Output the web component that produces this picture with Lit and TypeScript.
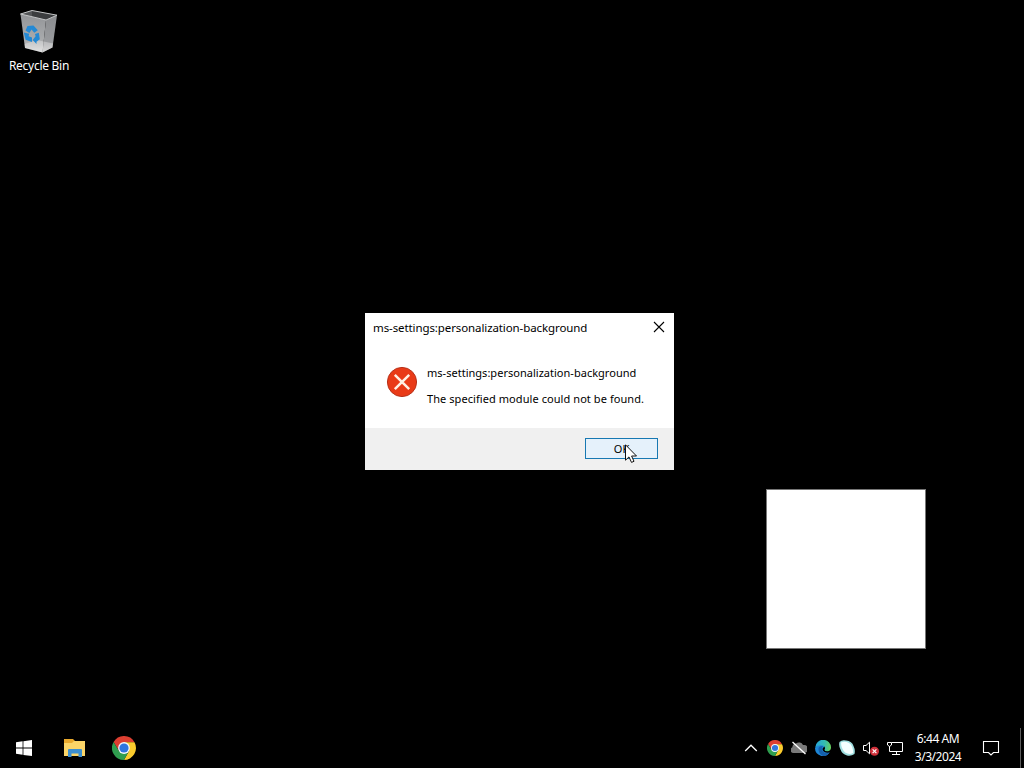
import {LitElement, css, html, svg} from 'lit';
import {customElement, property} from 'lit/decorators.js';

const chromeMark = svg`
  <path d="M12 6.2 H22.5 A12 12 0 0 0 1.6 6 L7 15 L12 12 Z" fill="#dd3f31" />
  <path d="M17.1 14.8 L12 24 A12 12 0 0 0 22.5 6.2 H12 V12 Z" fill="#fbcb2d" />
  <path d="M1.6 6 A12 12 0 0 0 12 24 L17.1 14.8 L12 12 L7 15 Z" fill="#2f9e4f" />
  <circle cx="12" cy="12" r="5.9" fill="#f4f7fb" />
  <circle cx="12" cy="12" r="4.6" fill="#2f76df" />
`;

@customElement('desktop-icon')
export class DesktopIcon extends LitElement {
  @property() label = '';

  static styles = css`
    :host {
      display: flex;
      flex-direction: column;
      align-items: center;
      gap: 1px;
      width: 76px;
      color: #fff;
      font-size: 12px;
      line-height: 16px;
    }

    .picture {
      display: block;
      width: 48px;
      height: 48px;
    }

    .label {
      letter-spacing: -0.27px;
      white-space: nowrap;
      text-shadow: 0 1px 2px #000;
    }
  `;

  render() {
    return html`
      <svg class="picture" viewBox="0 0 48 48">
        <defs>
          <linearGradient id="left" x1="0" y1="0" x2="0" y2="1">
            <stop offset="0" stop-color="#939598" />
            <stop offset="0.7" stop-color="#aaacae" />
            <stop offset="1" stop-color="#dcdcdc" />
          </linearGradient>
          <linearGradient id="right" x1="0" y1="0" x2="0" y2="1">
            <stop offset="0" stop-color="#8b8d90" />
            <stop offset="0.72" stop-color="#999b9e" />
            <stop offset="1" stop-color="#c9c9ca" />
          </linearGradient>
        </defs>
        <path d="M5.5 5 L17 1.5 L42 6.2 L31 11 Z" fill="#3b3d3f" />
        <path d="M5.5 5 L17 1.5 V7.5 Z" fill="#535557" />
        <path d="M5.5 5 L31 11 L27.5 43.5 L10 39 Z" fill="url(#left)" />
        <path d="M31 11 L42 6.2 L37.5 38.5 L27.5 43.5 Z" fill="url(#right)" />
        <path d="M9.5 35 L22 31 L38 34.5 L37.5 38.5 L27.5 43.5 L10 39 Z" fill="#ececec" opacity="0.4" />
        <path d="M5.5 5 L17 1.5 L42 6.2 L31 11 Z" fill="none" stroke="#c4c6c7" />
        <g fill="#2389d4">
          <path d="M12.5 17 L18.5 16.5 L22.8 21.2 L19.3 23.8 L16.5 20.5 L14.4 24 L10.5 21.5 Z" />
          <path d="M8.8 23.5 L14.2 24.7 L13.6 27.2 L17 28.5 V33 L10.6 30.8 Z" />
          <path d="M20 25 L23.8 23.8 L24.8 30.2 L21.5 32.8 V35 L17.7 31 L20.6 27.2 Z" />
        </g>
      </svg>
      <span class="label">${this.label}</span>
    `;
  }
}

@customElement('message-box')
export class MessageBox extends LitElement {
  @property() heading = '';
  @property() message = '';

  static styles = css`
    :host {
      display: flex;
      flex-direction: column;
      box-sizing: border-box;
      width: 309px;
      height: 157px;
      background: #fff;
      color: #000;
      font-size: 12px;
      line-height: 16px;
    }

    .title-bar {
      display: flex;
      justify-content: space-between;
      height: 30px;
      padding: 7px 9px 0 8px;
      box-sizing: border-box;
    }

    .title {
      font-size: 11.5px;
      letter-spacing: -0.1px;
      white-space: nowrap;
    }

    .close {
      width: 12px;
      height: 12px;
      margin-top: 1px;
    }

    .content {
      display: flex;
      flex: 1;
      gap: 9px;
      padding: 23px 0 0 21px;
    }

    .error {
      flex: none;
      width: 32px;
      height: 32px;
    }

    .lines {
      display: flex;
      flex-direction: column;
      gap: 10px;
      margin-top: -1px;
      font-size: 11px;
      white-space: nowrap;
    }

    .line {
      letter-spacing: 0.02px;
    }

    .line + .line {
      letter-spacing: 0.07px;
    }

    .footer {
      display: flex;
      justify-content: flex-end;
      height: 42px;
      padding: 10px 16px 0 0;
      box-sizing: border-box;
      background: #f0f0f0;
    }

    .ok {
      width: 73px;
      height: 21px;
      padding: 0;
      border: 1px solid #1778b2;
      background: #e5f1fb;
      color: #000;
      font: inherit;
      font-size: 11px;
      line-height: 18px;
    }
  `;

  render() {
    return html`
      <div class="title-bar">
        <span class="title">${this.heading}</span>
        <svg class="close" viewBox="0 0 12 12">
          <path d="M1 1 L11 11 M11 1 L1 11" stroke="#000" stroke-width="1.1" />
        </svg>
      </div>
      <div class="content">
        <svg class="error" viewBox="0 0 32 32">
          <circle cx="16" cy="16" r="14.6" fill="#e93a17" stroke="#b7321a" />
          <path d="M8.8 8.8 L23.2 23.2 M23.2 8.8 L8.8 23.2" stroke="#fff0e4" stroke-width="2.5" />
        </svg>
        <div class="lines">
          <span class="line">${this.heading}</span>
          <span class="line">${this.message}</span>
        </div>
      </div>
      <div class="footer">
        <button class="ok">OK</button>
      </div>
    `;
  }
}

@customElement('task-bar')
export class TaskBar extends LitElement {
  @property() time = '';
  @property() date = '';

  static styles = css`
    :host {
      display: flex;
      justify-content: space-between;
      height: 40px;
      color: #fff;
      font-size: 12px;
    }

    .apps,
    .tray {
      display: flex;
      align-items: center;
    }

    .apps {
      gap: 2px;
    }

    .app {
      display: flex;
      align-items: center;
      justify-content: center;
      width: 48px;
      height: 40px;
    }

    .app svg {
      width: 24px;
      height: 24px;
    }

    .status {
      display: flex;
      gap: 8px;
    }

    .status svg {
      width: 16px;
      height: 16px;
    }

    .clock {
      display: flex;
      flex-direction: column;
      align-items: center;
      width: 70px;
      padding-bottom: 1px;
      line-height: 18px;
      letter-spacing: -0.45px;
      white-space: nowrap;
    }

    .actions {
      width: 18px;
      height: 18px;
      margin: 0 20px 0 9px;
    }

    .peek {
      width: 4px;
      height: 40px;
      border-left: 1px solid #5c5c5c;
      box-sizing: border-box;
    }
  `;

  render() {
    return html`
      <div class="apps">
        <div class="app">
          <svg viewBox="0 0 24 24">
            <path d="M4 6.3 L10.6 5.3 V11.5 H4 Z M11.4 5.2 L20 4 V11.5 H11.4 Z M4 12.5 H10.6 V18.8 L4 17.8 Z M11.4 12.5 H20 V20 L11.4 18.9 Z" fill="#fff" />
          </svg>
        </div>
        <div class="app">
          <svg viewBox="0 0 24 24">
            <path d="M2 3 H11 L13 5 H22.5 V8 H2 Z" fill="#e9a92d" />
            <path d="M2 7 H10 L12 5 H23 V20 H2 Z" fill="#fbd568" />
            <path d="M6 21 V14 Q6 13 7 13 H19 Q20 13 20 14 V21 H16.5 V17.5 H9.5 V21 Z" fill="#3c8fcf" />
          </svg>
        </div>
        <div class="app">
          <svg viewBox="0 0 24 24">${chromeMark}</svg>
        </div>
      </div>
      <div class="tray">
        <div class="status">
          <svg viewBox="0 0 16 16">
            <path d="M2.2 11 L8 5.2 L13.8 11" fill="none" stroke="#fff" stroke-width="1.3" />
          </svg>
          <svg viewBox="0 0 24 24">${chromeMark}</svg>
          <svg viewBox="0 0 16 16">
            <path d="M2.5 13 A3 3 0 0 1 1.4 7.2 A3.5 3.5 0 0 1 5 3.6 A4.4 4.4 0 0 1 12 5 A4 4 0 0 1 13.5 13 Z" fill="#7a7a7a" />
            <path d="M1.5 2 L14.5 14" stroke="#fff" stroke-width="1.3" />
          </svg>
          <svg viewBox="0 0 16 16">
            <defs>
              <linearGradient id="wave" x1="0" y1="0.3" x2="1" y2="0.4">
                <stop offset="0" stop-color="#25a4dc" />
                <stop offset="0.6" stop-color="#35bcae" />
                <stop offset="1" stop-color="#66cf60" />
              </linearGradient>
            </defs>
            <path d="M0 8 A8 8 0 0 1 8 4 Q10 5 9 7 Q6 9 9 11.8 Q12 13.4 14.8 12.2 A8 8 0 0 1 0 8 Z" fill="#1d86d6" />
            <path d="M3.5 8 Q4.5 5.6 8 6 Q5.5 9 8 11.8 Q10.8 14 14.6 12.4 Q12 16 8 16 Q2.8 13 3.5 8 Z" fill="#1560ac" />
            <path d="M0.2 7.4 A7.8 7.8 0 0 1 16 8 Q15.7 11 12.5 11.2 Q9 11.2 9.6 9.5 Q11 7.2 8 5.6 Q4 4.2 0.2 7.4 Z" fill="url(#wave)" />
          </svg>
          <svg viewBox="0 0 16 16">
            <path d="M0.5 2 Q3 -0.5 7 0.5 Q13 1 14.5 6 Q16.5 10 15.5 14 Q12 16.5 8 15.5 Q3 14 1.5 9.5 Q-0.5 6 0.5 2 Z" fill="#9fdfe0" />
            <path d="M2 2.5 Q6 0.8 10 3 Q14 5.5 14.2 13 Q10 15 6.5 12.8 Q2 9 2 2.5 Z" fill="#f4ffff" />
          </svg>
          <svg viewBox="0 0 16 16">
            <path d="M0.5 5.5 H3 L6.5 2.2 V13.8 L3 10.5 H0.5 Z" fill="none" stroke="#fff" />
            <circle cx="11.5" cy="11.2" r="4.5" fill="#cf2f39" />
            <path d="M9.6 9.3 L13.4 13.1 M13.4 9.3 L9.6 13.1" stroke="#fff" stroke-width="1.2" />
          </svg>
          <svg viewBox="0 0 16 16">
            <path d="M4.5 2.5 H15.5 V11.5 H2.5 V6 M9.5 11.5 V14.5 M5 14.5 H13" fill="none" stroke="#fff" />
            <path d="M0.5 2.5 H4.5 V5 L2.5 6.5 L0.5 5 Z" fill="#000" stroke="#fff" />
          </svg>
        </div>
        <div class="clock">
          <span>${this.time}</span>
          <span>${this.date}</span>
        </div>
        <svg class="actions" viewBox="0 0 18 18">
          <path d="M1.5 2.5 H16.5 V13.5 H11.5 L9 16 L6.5 13.5 H1.5 Z" fill="none" stroke="#fff" stroke-width="1.1" />
        </svg>
        <div class="peek"></div>
      </div>
    `;
  }
}

@customElement('app-root')
export class AppRoot extends LitElement {
  static styles = css`
    :host {
      display: flex;
      flex-direction: column;
      position: relative;
      width: 1024px;
      height: 768px;
      overflow: hidden;
      background: #000;
      font-family: 'Noto Sans', 'Open Sans', sans-serif;
    }

    .desktop {
      flex: 1;
      padding: 9px 0 0 1px;
    }

    .dialog {
      position: absolute;
      left: 365px;
      top: 313px;
    }

    .blank {
      position: absolute;
      left: 766px;
      top: 489px;
      width: 160px;
      height: 160px;
      box-sizing: border-box;
      border: 1px solid #777;
      background: #fff;
    }

    .cursor {
      position: absolute;
      left: 625px;
      top: 444px;
      width: 12px;
      height: 19px;
    }
  `;

  render() {
    return html`
      <div class="desktop">
        <desktop-icon label="Recycle Bin"></desktop-icon>
      </div>
      <message-box
        class="dialog"
        heading="ms-settings:personalization-background"
        message="The specified module could not be found."
      ></message-box>
      <div class="blank"></div>
      <task-bar time="6:44 AM" date="3/3/2024"></task-bar>
      <svg class="cursor" viewBox="0 0 12 19">
        <path d="M0.5 0.8 V16.2 L4 12.9 L6.5 18.4 L9 17.3 L6.6 12 H11.5 Z" fill="#fff" stroke="#111" />
      </svg>
    `;
  }
}
